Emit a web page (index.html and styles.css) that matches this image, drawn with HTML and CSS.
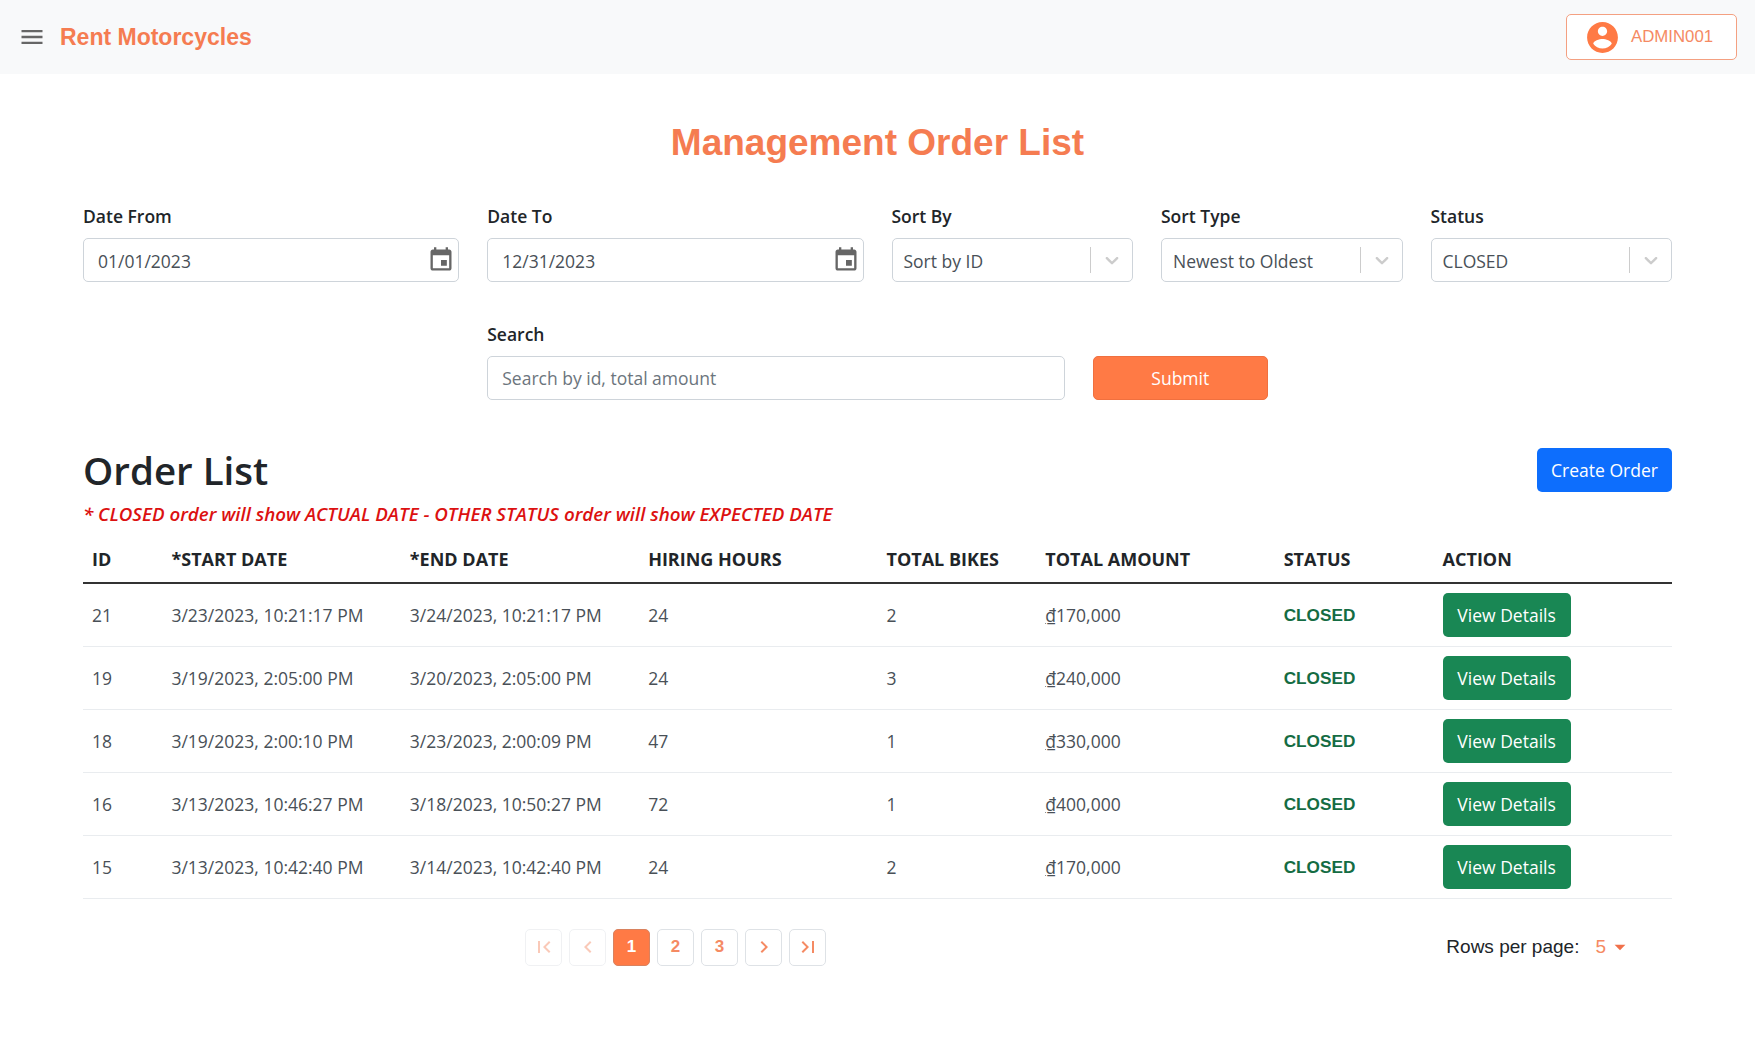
FILE: index.html
```html
<!DOCTYPE html>
<html lang="en">
<head>
    <meta charset="UTF-8">
    <meta name="viewport" content="width=device-width, initial-scale=1.0">
    <title>Management Order List</title>
    <link rel="stylesheet" href="styles.css">
</head>
<body>
    <header class="navbar">
        <div class="navbar-left">
            <svg class="menu-icon" viewBox="0 0 24 24"><path d="M3 18h18v-2H3v2zm0-5h18v-2H3v2zm0-7v2h18V6H3z"/></svg>
            <span class="brand">Rent Motorcycles</span>
        </div>
        <button class="user-btn" type="button">
            <svg class="user-icon" viewBox="0 0 24 24"><path d="M12 2C6.48 2 2 6.48 2 12s4.48 10 10 10 10-4.48 10-10S17.52 2 12 2zm0 3c1.66 0 3 1.34 3 3s-1.34 3-3 3-3-1.34-3-3 1.34-3 3-3zm0 14.2c-2.5 0-4.71-1.28-6-3.22.03-1.99 4-3.08 6-3.08 1.99 0 5.97 1.09 6 3.08-1.29 1.94-3.5 3.22-6 3.22z"/></svg>
            ADMIN001
        </button>
    </header>

    <main class="container">
        <h1 class="page-title">Management Order List</h1>

        <form class="filters">
            <div class="field span-3">
                <label>Date From</label>
                <div class="control">
                    <span class="value date-value">01/01/2023</span>
                    <svg class="calendar-icon" viewBox="0 0 24 24"><path d="M17 12h-5v5h5v-5zM16 1v2H8V1H6v2H5c-1.11 0-1.99.9-1.99 2L3 19c0 1.1.89 2 2 2h14c1.1 0 2-.9 2-2V5c0-1.1-.9-2-2-2h-1V1h-2zm3 18H5V8h14v11z"/></svg>
                </div>
            </div>
            <div class="field span-3">
                <label>Date To</label>
                <div class="control">
                    <span class="value date-value">12/31/2023</span>
                    <svg class="calendar-icon" viewBox="0 0 24 24"><path d="M17 12h-5v5h5v-5zM16 1v2H8V1H6v2H5c-1.11 0-1.99.9-1.99 2L3 19c0 1.1.89 2 2 2h14c1.1 0 2-.9 2-2V5c0-1.1-.9-2-2-2h-1V1h-2zm3 18H5V8h14v11z"/></svg>
                </div>
            </div>
            <div class="field span-2">
                <label>Sort By</label>
                <div class="control select">
                    <span class="value">Sort by ID</span>
                    <span class="select-sep"></span>
                    <svg class="chevron" viewBox="0 0 20 20"><path d="M4.516 7.548c0.436-0.446 1.043-0.481 1.576 0l3.908 3.747 3.908-3.747c0.533-0.481 1.141-0.446 1.576 0 0.436 0.445 0.408 1.197 0 1.615-0.406 0.418-4.695 4.502-4.695 4.502-0.217 0.223-0.502 0.335-0.789 0.335s-0.572-0.112-0.79-0.335c0 0-4.287-4.084-4.695-4.502s-0.436-1.17 0-1.615z"/></svg>
                </div>
            </div>
            <div class="field span-2">
                <label>Sort Type</label>
                <div class="control select">
                    <span class="value">Newest to Oldest</span>
                    <span class="select-sep"></span>
                    <svg class="chevron" viewBox="0 0 20 20"><path d="M4.516 7.548c0.436-0.446 1.043-0.481 1.576 0l3.908 3.747 3.908-3.747c0.533-0.481 1.141-0.446 1.576 0 0.436 0.445 0.408 1.197 0 1.615-0.406 0.418-4.695 4.502-4.695 4.502-0.217 0.223-0.502 0.335-0.789 0.335s-0.572-0.112-0.79-0.335c0 0-4.287-4.084-4.695-4.502s-0.436-1.17 0-1.615z"/></svg>
                </div>
            </div>
            <div class="field span-2">
                <label>Status</label>
                <div class="control select">
                    <span class="value">CLOSED</span>
                    <span class="select-sep"></span>
                    <svg class="chevron" viewBox="0 0 20 20"><path d="M4.516 7.548c0.436-0.446 1.043-0.481 1.576 0l3.908 3.747 3.908-3.747c0.533-0.481 1.141-0.446 1.576 0 0.436 0.445 0.408 1.197 0 1.615-0.406 0.418-4.695 4.502-4.695 4.502-0.217 0.223-0.502 0.335-0.789 0.335s-0.572-0.112-0.79-0.335c0 0-4.287-4.084-4.695-4.502s-0.436-1.17 0-1.615z"/></svg>
                </div>
            </div>
            <div class="search-row">
                <div class="field search-field">
                    <label for="search">Search</label>
                    <input class="search-input" id="search" type="text" placeholder="Search by id, total amount">
                </div>
                <button class="btn-submit" type="button">Submit</button>
            </div>
        </form>

        <div class="list-head">
            <h2>Order List</h2>
            <button class="btn-create" type="button">Create Order</button>
        </div>
        <p class="note">* CLOSED order will show ACTUAL DATE - OTHER STATUS order will show EXPECTED DATE</p>

        <table class="orders">
            <thead>
                <tr>
                    <th class="col-id">ID</th>
                    <th class="col-wide">*START DATE</th>
                    <th class="col-wide">*END DATE</th>
                    <th class="col-wide">HIRING HOURS</th>
                    <th class="col-small">TOTAL BIKES</th>
                    <th class="col-wide">TOTAL AMOUNT</th>
                    <th class="col-small">STATUS</th>
                    <th class="col-wide">ACTION</th>
                </tr>
            </thead>
            <tbody>
                <tr>
                    <td>21</td><td>3/23/2023, 10:21:17 PM</td><td>3/24/2023, 10:21:17 PM</td><td>24</td><td>2</td>
                    <td><span class="dong">₫</span>170,000</td><td class="closed">CLOSED</td>
                    <td><button class="btn-view" type="button">View Details</button></td>
                </tr>
                <tr>
                    <td>19</td><td>3/19/2023, 2:05:00 PM</td><td>3/20/2023, 2:05:00 PM</td><td>24</td><td>3</td>
                    <td><span class="dong">₫</span>240,000</td><td class="closed">CLOSED</td>
                    <td><button class="btn-view" type="button">View Details</button></td>
                </tr>
                <tr>
                    <td>18</td><td>3/19/2023, 2:00:10 PM</td><td>3/23/2023, 2:00:09 PM</td><td>47</td><td>1</td>
                    <td><span class="dong">₫</span>330,000</td><td class="closed">CLOSED</td>
                    <td><button class="btn-view" type="button">View Details</button></td>
                </tr>
                <tr>
                    <td>16</td><td>3/13/2023, 10:46:27 PM</td><td>3/18/2023, 10:50:27 PM</td><td>72</td><td>1</td>
                    <td><span class="dong">₫</span>400,000</td><td class="closed">CLOSED</td>
                    <td><button class="btn-view" type="button">View Details</button></td>
                </tr>
                <tr>
                    <td>15</td><td>3/13/2023, 10:42:40 PM</td><td>3/14/2023, 10:42:40 PM</td><td>24</td><td>2</td>
                    <td><span class="dong">₫</span>170,000</td><td class="closed">CLOSED</td>
                    <td><button class="btn-view" type="button">View Details</button></td>
                </tr>
            </tbody>
        </table>

        <div class="table-foot">
            <nav class="pagination">
                <button class="page-btn disabled" type="button"><svg viewBox="0 0 24 24"><path d="M18.41 16.59L13.82 12l4.59-4.59L17 6l-6 6 6 6zM6 6h2v12H6z"/></svg></button>
                <button class="page-btn disabled" type="button"><svg viewBox="0 0 24 24"><path d="M15.41 7.41L14 6l-6 6 6 6 1.41-1.41L10.83 12z"/></svg></button>
                <button class="page-btn active" type="button">1</button>
                <button class="page-btn" type="button">2</button>
                <button class="page-btn" type="button">3</button>
                <button class="page-btn" type="button"><svg viewBox="0 0 24 24"><path d="M10 6L8.59 7.41 13.17 12l-4.58 4.59L10 18l6-6z"/></svg></button>
                <button class="page-btn" type="button"><svg viewBox="0 0 24 24"><path d="M5.59 7.41L10.18 12l-4.59 4.59L7 18l6-6-6-6zM16 6h2v12h-2z"/></svg></button>
            </nav>
            <div class="rows-per-page">
                <span>Rows per page:</span>
                <span class="rows-value">5</span>
                <svg class="rows-caret" viewBox="0 0 24 24"><path d="M7 10l5 5 5-5z"/></svg>
            </div>
        </div>
    </main>
</body>
</html>
```

FILE: styles.css
```css
* {
    box-sizing: border-box;
}

body {
    margin: 0;
    font-family: "Open Sans", sans-serif;
    font-size: 17.5px;
    color: #212529;
    background-color: #fff;
}

button {
    font-family: inherit;
    cursor: pointer;
}

.navbar {
    height: 74px;
    padding: 0 18px;
    display: flex;
    align-items: center;
    justify-content: space-between;
    background-color: #f8f9fa;
}

.navbar-left {
    display: flex;
    align-items: center;
    gap: 14px;
}

.menu-icon {
    width: 28px;
    height: 28px;
    fill: #666;
}

.brand {
    font-family: "Liberation Sans", Arial, sans-serif;
    font-size: 23px;
    font-weight: 700;
    color: #f57c51;
}

.user-btn {
    width: 171px;
    height: 46px;
    display: flex;
    align-items: center;
    gap: 10px;
    padding: 0 0 0 17px;
    background-color: #fff;
    border: 1px solid #f4a081;
    border-radius: 5px;
    font-family: "Liberation Sans", Arial, sans-serif;
    font-size: 16.8px;
    color: #f58a63;
}

.user-icon {
    width: 37px;
    height: 37px;
    fill: #ff7a45;
}

.container {
    padding: 0 83px;
}

.page-title {
    margin: 0;
    padding-top: 44px;
    height: 124px;
    text-align: center;
    font-family: "Liberation Sans", Arial, sans-serif;
    font-size: 37px;
    line-height: 50px;
    color: #f57c51;
}

.filters {
    display: grid;
    grid-template-columns: repeat(12, 1fr);
    column-gap: 28px;
    row-gap: 34px;
}

.span-3 {
    grid-column: span 3;
}

.span-2 {
    grid-column: span 2;
}

.field label {
    display: block;
    height: 40px;
    line-height: 36px;
    font-weight: 600;
    color: #212529;
}

.control {
    height: 44px;
    display: flex;
    align-items: center;
    padding-left: 14px;
    padding-right: 3px;
    border: 1px solid #ced4da;
    border-radius: 5px;
    color: #495057;
}

.value {
    flex: 1;
    padding-top: 2px;
}

.calendar-icon {
    width: 28px;
    height: 28px;
    fill: #666;
}

.select {
    padding-left: 11px;
    padding-right: 9px;
}

.select-sep {
    width: 1px;
    height: 26px;
    margin-right: 10px;
    background-color: #ccc;
}

.chevron {
    width: 22px;
    height: 22px;
    fill: #ccc;
}

.search-row {
    grid-column: 4 / span 6;
    display: flex;
    align-items: flex-end;
    gap: 28px;
}

.search-field {
    flex: 1;
}

.search-input {
    display: block;
    width: 100%;
    height: 44px;
    padding: 0 14px;
    border: 1px solid #ced4da;
    border-radius: 5px;
    font-family: inherit;
    font-size: inherit;
}

.search-input::placeholder {
    color: #6c757d;
}

.btn-submit {
    width: 175px;
    height: 44px;
    background-color: #ff7a45;
    border: 1px solid #f0703f;
    border-radius: 5px;
    font-size: inherit;
    color: #fff;
}

.list-head {
    margin-top: 48px;
    display: flex;
    align-items: center;
    justify-content: space-between;
}

.list-head h2 {
    margin: 0;
    font-size: 38.5px;
    font-weight: 600;
    line-height: 44px;
}

.btn-create {
    width: 135px;
    height: 44px;
    background-color: #0d6efd;
    border: none;
    border-radius: 5px;
    font-size: inherit;
    color: #fff;
}

.note {
    margin: 9px 0 0;
    line-height: 26px;
    font-size: 18.75px;
    font-style: italic;
    font-weight: 600;
    color: #dc1111;
}

.orders {
    width: 100%;
    margin-top: 9px;
    border-collapse: collapse;
    table-layout: fixed;
}

.col-id {
    width: 5%;
}

.col-wide {
    width: 15%;
}

.col-small {
    width: 10%;
}

.orders th {
    height: 47px;
    padding: 0 9px;
    text-align: left;
    font-size: 18px;
    font-weight: 700;
    border-bottom: 2px solid #333;
}

.orders td {
    height: 63px;
    padding: 0 9px;
    color: #495057;
    border-bottom: 1px solid #e9ecef;
}

.dong {
    text-decoration: underline;
}

.orders .closed {
    padding-top: 1px;
    font-family: "Liberation Sans", Arial, sans-serif;
    font-size: 17.2px;
    font-weight: 700;
    color: #146c43;
}

.btn-view {
    display: block;
    width: 128px;
    height: 44px;
    background-color: #198754;
    border: none;
    border-radius: 5px;
    font-size: inherit;
    color: #fff;
}

.table-foot {
    margin-top: 30px;
    display: flex;
    align-items: center;
}

.pagination {
    margin-left: 442px;
    display: flex;
    gap: 7px;
}

.page-btn {
    width: 37px;
    height: 37px;
    padding: 0;
    display: flex;
    align-items: center;
    justify-content: center;
    background-color: #fff;
    border: 1px solid #dee2e6;
    border-radius: 5px;
    font-family: "Liberation Sans", Arial, sans-serif;
    font-size: 17px;
    font-weight: 700;
    color: #f58a63;
}

.page-btn svg {
    width: 24px;
    height: 24px;
    fill: #f58a63;
}

.page-btn.disabled {
    opacity: 0.45;
}

.page-btn.active {
    background-color: #ff7a45;
    border-color: #d9825f;
    color: #fff;
}

.rows-per-page {
    margin-left: auto;
    margin-right: 39px;
    display: flex;
    align-items: center;
    font-family: "Liberation Sans", Arial, sans-serif;
    font-size: 19px;
    color: #212529;
}

.rows-value {
    margin-left: 16px;
    font-weight: 400;
    color: #f58a63;
}

.rows-caret {
    width: 26px;
    height: 26px;
    margin-left: 1px;
    fill: #f0704a;
}
```
